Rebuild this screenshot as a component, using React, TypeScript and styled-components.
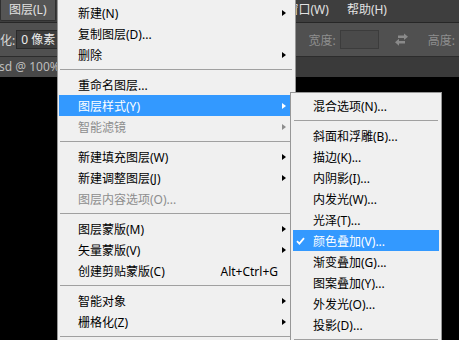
import React from "react";
import styled, { createGlobalStyle } from "styled-components";

const GlobalStyle = createGlobalStyle`
  html, body { margin: 0; padding: 0; background: #000; }
  body { font-family: "Noto Sans", "Noto Sans CJK SC", sans-serif; }
`;

const Screen = styled.div`
  position: relative;
  width: 459px;
  height: 340px;
  overflow: hidden;
  display: flex;
  flex-direction: column;
  background: #000;
  font-family: "Noto Sans", "Noto Sans CJK SC", sans-serif;
  font-size: 12px;
`;

const MenuBar = styled.div`
  height: 22px;
  flex: none;
  display: flex;
  align-items: stretch;
  background: #3e3e3e;
  border-bottom: 1px solid #272727;
`;

const MenuTitle = styled.div<{ $open?: boolean; $ml?: number }>`
  display: flex;
  align-items: center;
  padding: 0 8px 2px 8px;
  margin-left: ${(p) => p.$ml ?? 0}px;
  color: #e2e2e2;
  white-space: nowrap;
  background: ${(p) => (p.$open ? "#555555" : "transparent")};
  border: 1px solid ${(p) => (p.$open ? "#2f2f2f" : "transparent")};
  border-top: none;
  border-radius: 0 0 2px 2px;
  margin-bottom: 1px;
`;

const OptionsBar = styled.div`
  height: 33px;
  flex: none;
  display: flex;
  align-items: center;
  background: #505050;
  border-bottom: 1px solid #2c2c2c;
  color: #d4d4d4;
  white-space: nowrap;
`;

const OptLabel = styled.span<{ $dim?: boolean; $gap: number }>`
  color: ${(p) => (p.$dim ? "#8e8e8e" : "#d8d8d8")};
  margin-right: ${(p) => p.$gap}px;
`;

const OptInput = styled.div<{ $dim?: boolean; $w: number }>`
  width: ${(p) => p.$w}px;
  height: 19px;
  box-sizing: border-box;
  display: flex;
  align-items: center;
  padding-left: 4px;
  padding-bottom: 1px;
  background: ${(p) => (p.$dim ? "#4a4a4a" : "#3c3c3c")};
  border: 1px solid ${(p) => (p.$dim ? "#3c3c3c" : "#2a2a2a")};
  color: #ececec;
`;

const OptGroup = styled.div<{ $ml: number }>`
  display: flex;
  align-items: center;
  margin-left: ${(p) => p.$ml}px;
`;

const TabBar = styled.div`
  height: 20px;
  flex: none;
  display: flex;
  background: #3a3a3a;
`;

const DocTab = styled.div`
  display: flex;
  align-items: center;
  padding: 0 80px 1px 0;
  margin-left: -1px;
  background: #484848;
  color: #bdbdbd;
  white-space: nowrap;
`;

const Canvas = styled.div`
  flex: 1;
  background: #000;
`;

const Menu = styled.div<{ $left: number; $top: number; $width: number }>`
  position: absolute;
  left: ${(p) => p.$left}px;
  top: ${(p) => p.$top}px;
  width: ${(p) => p.$width}px;
  box-sizing: border-box;
  background: #f0f0f0;
  border: 1px solid #979797;
  padding: 2px 1px 10px 1px;
  font-family: "Noto Sans", "Noto Sans CJK SC", sans-serif;
  font-size: 12px;
`;

const MainMenu = styled(Menu)`
  border-top: none;
  padding-top: 2px;
`;

const SubMenu = styled(Menu)`
  padding: 2px 2px 20px 2px;
`;

const Item = styled.div<{ $active?: boolean; $disabled?: boolean; $indent: number }>`
  position: relative;
  display: flex;
  align-items: center;
  height: 21px;
  padding-left: ${(p) => p.$indent}px;
  padding-right: 8px;
  white-space: nowrap;
  background: ${(p) => (p.$active ? "#3399ff" : "transparent")};
  color: ${(p) => (p.$active ? "#ffffff" : p.$disabled ? "#8d8d8d" : "#000000")};
`;

const Label = styled.span`
  flex: 1;
  line-height: 21px;
  padding-top: 1px;
`;

const Shortcut = styled.span`
  margin-right: 8px;
  line-height: 21px;
  padding-top: 1px;
`;

const Arrow = styled.span<{ $color: string }>`
  width: 0;
  height: 0;
  border-left: 4px solid ${(p) => p.$color};
  border-top: 3.5px solid transparent;
  border-bottom: 3.5px solid transparent;
`;

const Check = styled.svg`
  position: absolute;
  left: 3px;
  top: 7px;
`;

const Separator = styled.div<{ $ml: number; $mr: number }>`
  height: 1px;
  margin: 4px ${(p) => p.$mr}px 4px ${(p) => p.$ml}px;
  background: #a0a0a0;
`;

type Entry =
  | { sep: true }
  | {
      sep?: false;
      label: string;
      sub?: boolean;
      disabled?: boolean;
      active?: boolean;
      shortcut?: string;
      checked?: boolean;
    };

const mainEntries: Entry[] = [
  { label: "新建(N)", sub: true },
  { label: "复制图层(D)..." },
  { label: "删除", sub: true },
  { sep: true },
  { label: "重命名图层..." },
  { label: "图层样式(Y)", sub: true, active: true },
  { label: "智能滤镜", sub: true, disabled: true },
  { sep: true },
  { label: "新建填充图层(W)", sub: true },
  { label: "新建调整图层(J)", sub: true },
  { label: "图层内容选项(O)...", disabled: true },
  { sep: true },
  { label: "图层蒙版(M)", sub: true },
  { label: "矢量蒙版(V)", sub: true },
  { label: "创建剪贴蒙版(C)", shortcut: "Alt+Ctrl+G" },
  { sep: true },
  { label: "智能对象", sub: true },
  { label: "栅格化(Z)", sub: true },
  { sep: true },
];

const subEntries: Entry[] = [
  { label: "混合选项(N)..." },
  { sep: true },
  { label: "斜面和浮雕(B)..." },
  { label: "描边(K)..." },
  { label: "内阴影(I)..." },
  { label: "内发光(W)..." },
  { label: "光泽(T)..." },
  { label: "颜色叠加(V)...", active: true, checked: true },
  { label: "渐变叠加(G)..." },
  { label: "图案叠加(Y)..." },
  { label: "外发光(O)..." },
  { label: "投影(D)..." },
  { sep: true },
];

function renderEntries(entries: Entry[], indent: number, sepMl: number, sepMr: number) {
  return entries.map((e, i) => {
    if (e.sep) return <Separator key={i} $ml={sepMl} $mr={sepMr} />;
    const arrowColor = e.active ? "#ffffff" : e.disabled ? "#8d8d8d" : "#000000";
    return (
      <Item key={i} $active={e.active} $disabled={e.disabled} $indent={indent}>
        {e.checked && (
          <Check width="9" height="8" viewBox="0 0 9 8">
            <path d="M1 4.2 L3.4 6.6 L8 1.2" fill="none" stroke="#ffffff" strokeWidth="1.8" />
          </Check>
        )}
        <Label>{e.label}</Label>
        {e.shortcut && <Shortcut>{e.shortcut}</Shortcut>}
        {e.sub && <Arrow $color={arrowColor} />}
      </Item>
    );
  });
}

const SwapIcon = () => (
  <svg width="15" height="13" viewBox="0 0 15 13">
    <rect x="4" y="2.5" width="6.5" height="2.5" fill="#8a8a8a" />
    <polygon points="10,0.5 14,3.75 10,7" fill="#8a8a8a" />
    <rect x="4.5" y="8" width="6.5" height="2.5" fill="#8a8a8a" />
    <polygon points="5,5.75 1,9.25 5,12.75" fill="#8a8a8a" />
  </svg>
);

export default function App() {
  return (
    <>
      <GlobalStyle />
      <Screen>
        <MenuBar>
          <MenuTitle $open>图层(L)</MenuTitle>
          <MenuTitle $ml={222}>窗口(W)</MenuTitle>
          <MenuTitle>帮助(H)</MenuTitle>
        </MenuBar>
        <OptionsBar>
          <OptLabel $gap={1}>化:</OptLabel>
          <OptInput $w={60}>0 像素</OptInput>
          <OptGroup $ml={235}>
            <OptLabel $dim $gap={4}>宽度:</OptLabel>
            <OptInput $dim $w={39} />
          </OptGroup>
          <OptGroup $ml={15}>
            <SwapIcon />
          </OptGroup>
          <OptGroup $ml={19}>
            <OptLabel $dim $gap={4}>高度:</OptLabel>
          </OptGroup>
        </OptionsBar>
        <TabBar>
          <DocTab>sd @ 100%</DocTab>
        </TabBar>
        <Canvas />
        <MainMenu $left={57} $top={0} $width={239}>
          {renderEntries(mainEntries, 19, 1, 2)}
        </MainMenu>
        <SubMenu $left={290} $top={92} $width={152}>
          {renderEntries(subEntries, 20, 1, 1)}
        </SubMenu>
      </Screen>
    </>
  );
}
